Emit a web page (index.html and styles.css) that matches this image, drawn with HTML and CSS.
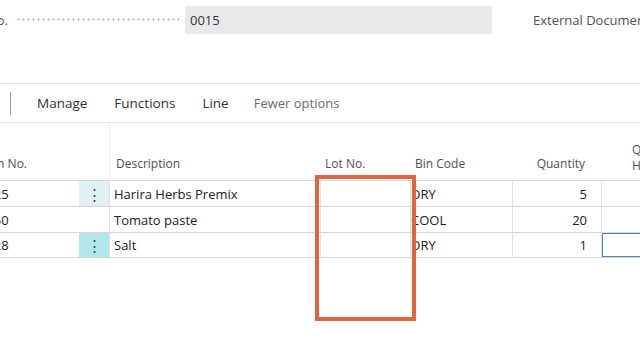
FILE: index.html
```html
<!DOCTYPE html>
<html>
<head>
<meta charset="utf-8">
<link rel="stylesheet" href="styles.css">
</head>
<body>
<div class="page">
  <div class="field-row">
    <span class="caption">No.</span>
    <span class="leader"></span>
    <div class="input-box">0015</div>
    <span class="ext">External Document No.</span>
  </div>
  <div class="actionbar">
    <span class="sep"></span>
    <span class="act">Manage</span>
    <span class="act">Functions</span>
    <span class="act">Line</span>
    <span class="act muted">Fewer options</span>
  </div>
  <div class="grid">
    <div class="hd c-no">Item No.</div>
    <div class="hd c-menu"></div>
    <div class="hd c-desc">Description</div>
    <div class="hd c-lot">Lot No.</div>
    <div class="hd c-bin">Bin Code</div>
    <div class="hd c-qty">Quantity</div>
    <div class="hd c-next"><span>Qty. to<br>Handle</span></div>

    <div class="cell c-no">1925</div>
    <div class="cell c-menu m-light">⋮</div>
    <div class="cell c-desc">Harira Herbs Premix</div>
    <div class="cell c-lot"></div>
    <div class="cell c-bin">DRY</div>
    <div class="cell c-qty">5</div>
    <div class="cell c-next"></div>

    <div class="cell c-no">1950</div>
    <div class="cell c-menu"></div>
    <div class="cell c-desc">Tomato paste</div>
    <div class="cell c-lot"></div>
    <div class="cell c-bin">COOL</div>
    <div class="cell c-qty">20</div>
    <div class="cell c-next"></div>

    <div class="cell c-no">1928</div>
    <div class="cell c-menu m-strong">⋮</div>
    <div class="cell c-desc">Salt</div>
    <div class="cell c-lot"></div>
    <div class="cell c-bin">DRY</div>
    <div class="cell c-qty">1</div>
    <div class="cell c-next"><div class="focus-box"></div></div>
  </div>
  <div class="highlight"></div>
</div>
</body>
</html>
```

FILE: styles.css
```css
* { box-sizing: border-box; }
html, body { margin: 0; padding: 0; }
body {
  width: 640px;
  height: 360px;
  overflow: hidden;
  background: #fff;
  font-family: "Open Sans", "Noto Sans", sans-serif;
  font-size: 13px;
  color: #212121;
}
.page { position: relative; width: 640px; height: 360px; overflow: hidden; }

.field-row {
  display: flex;
  align-items: center;
  height: 84px;
  padding-bottom: 48px;
  padding-top: 4px;
  border-bottom: 1px solid #e3e3e3;
  white-space: nowrap;
}
.field-row > * { flex-shrink: 0; }
.caption { color: #505050; margin-left: -13px; width: 29px; }
.leader {
  width: 166px;
  height: 3px;
  margin-right: 3px;
  background-image: radial-gradient(circle, #bdbdbd 0.9px, transparent 1.3px);
  background-size: 5px 3px;
}
.input-box {
  width: 307px;
  height: 28px;
  background: #e8e9ea;
  color: #333;
  padding: 5px 5px;
  line-height: 18px;
}
.ext { margin-left: 41px; color: #505050; }

.actionbar {
  display: flex;
  align-items: center;
  height: 39px;
  border-bottom: 1px solid #e3e3e3;
  font-size: 13.5px;
  color: #323130;
}
.actionbar > * { flex-shrink: 0; }
.sep { width: 1px; height: 23px; background: #9a9a9a; margin-left: 10px; margin-right: 26px; }
.act { margin-right: 27px; }
.act:nth-child(4) { margin-right: 25px; }
.muted { color: #6b6b6b; font-size: 13px; }

.grid {
  display: grid;
  grid-template-columns: 79px 30px 211px 90px 102px 89px 60px;
  grid-template-rows: 57px 26px 26px 26px;
  width: 667px;
}
.hd {
  display: flex;
  align-items: flex-end;
  padding-bottom: 8px;
  color: #505050;
  font-size: 12px;
  white-space: nowrap;
  overflow: hidden;
}
.hd.c-no { margin-left: -21px; }
.hd.c-desc { border-left: 1px solid #ececec; padding-left: 6px; }
.hd.c-lot { padding-left: 5px; }
.hd.c-bin { padding-left: 5px; }
.hd.c-qty { justify-content: flex-end; padding-right: 16px; }
.hd.c-next { padding-left: 31px; line-height: 16px; padding-bottom: 6px; }

.cell {
  border-top: 1px solid #d6d6d6;
  display: flex;
  align-items: center;
  white-space: nowrap;
  overflow: hidden;
  font-size: 13px;
}
.grid > .cell:nth-last-child(-n+7) { border-bottom: 1px solid #d6d6d6; }
.cell.c-no { margin-left: -21px; padding-left: 0; overflow: visible; }
.cell.c-menu { justify-content: center; font-size: 15px; color: #444; }
.m-light { background: #dff1f4; }
.m-strong { background: #b3e6ec; }
.cell.c-desc { border-left: 1px solid #e2e2e2; padding-left: 4px; }
.cell.c-lot { border-left: 1px solid #e2e2e2; }
.cell.c-bin { border-left: 1px solid #e2e2e2; padding-left: 0; }
.cell.c-qty { border-left: 1px solid #e2e2e2; justify-content: flex-end; padding-right: 14px; }
.cell.c-next { border-left: 1px solid #e2e2e2; padding: 0; align-items: stretch; }
.focus-box { flex: 1; border: 1px solid #4a86c5; }

.highlight {
  position: absolute;
  left: 315px;
  top: 175px;
  width: 101px;
  height: 146px;
  border: 4px solid #e2643a;
}
```
